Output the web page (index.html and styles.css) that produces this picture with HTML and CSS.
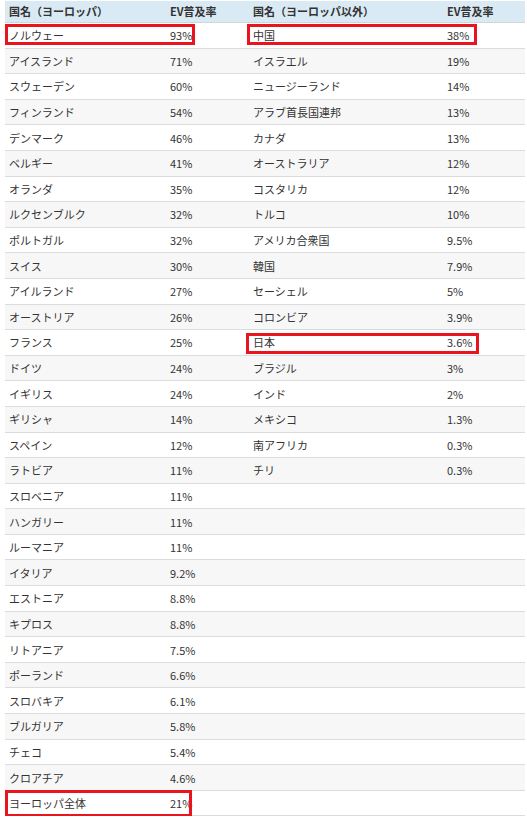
FILE: index.html
```html
<!DOCTYPE html>
<html lang="ja">
<head>
    <meta charset="UTF-8">
    <meta name="viewport" content="width=device-width, initial-scale=1.0">
    <title>EV普及率</title>
    <link rel="stylesheet" href="styles.css">
</head>
<body>

<div class="wrap">
<table class="ev-table">
    <colgroup>
        <col class="c-name-l">
        <col class="c-rate-l">
        <col class="c-name-r">
        <col class="c-rate-r">
    </colgroup>
    <thead>
        <tr>
            <th>国名（ヨーロッパ）</th>
            <th>EV普及率</th>
            <th>国名（ヨーロッパ以外）</th>
            <th>EV普及率</th>
        </tr>
    </thead>
    <tbody>
        <tr><td>ノルウェー</td><td>93%</td><td>中国</td><td>38%</td></tr>
        <tr><td>アイスランド</td><td>71%</td><td>イスラエル</td><td>19%</td></tr>
        <tr><td>スウェーデン</td><td>60%</td><td>ニュージーランド</td><td>14%</td></tr>
        <tr><td>フィンランド</td><td>54%</td><td>アラブ首長国連邦</td><td>13%</td></tr>
        <tr><td>デンマーク</td><td>46%</td><td>カナダ</td><td>13%</td></tr>
        <tr><td>ベルギー</td><td>41%</td><td>オーストラリア</td><td>12%</td></tr>
        <tr><td>オランダ</td><td>35%</td><td>コスタリカ</td><td>12%</td></tr>
        <tr><td>ルクセンブルク</td><td>32%</td><td>トルコ</td><td>10%</td></tr>
        <tr><td>ポルトガル</td><td>32%</td><td>アメリカ合衆国</td><td>9.5%</td></tr>
        <tr><td>スイス</td><td>30%</td><td>韓国</td><td>7.9%</td></tr>
        <tr><td>アイルランド</td><td>27%</td><td>セーシェル</td><td>5%</td></tr>
        <tr><td>オーストリア</td><td>26%</td><td>コロンビア</td><td>3.9%</td></tr>
        <tr><td>フランス</td><td>25%</td><td>日本</td><td>3.6%</td></tr>
        <tr><td>ドイツ</td><td>24%</td><td>ブラジル</td><td>3%</td></tr>
        <tr><td>イギリス</td><td>24%</td><td>インド</td><td>2%</td></tr>
        <tr><td>ギリシャ</td><td>14%</td><td>メキシコ</td><td>1.3%</td></tr>
        <tr><td>スペイン</td><td>12%</td><td>南アフリカ</td><td>0.3%</td></tr>
        <tr><td>ラトビア</td><td>11%</td><td>チリ</td><td>0.3%</td></tr>
        <tr><td>スロベニア</td><td>11%</td><td></td><td></td></tr>
        <tr><td>ハンガリー</td><td>11%</td><td></td><td></td></tr>
        <tr><td>ルーマニア</td><td>11%</td><td></td><td></td></tr>
        <tr><td>イタリア</td><td>9.2%</td><td></td><td></td></tr>
        <tr><td>エストニア</td><td>8.8%</td><td></td><td></td></tr>
        <tr><td>キプロス</td><td>8.8%</td><td></td><td></td></tr>
        <tr><td>リトアニア</td><td>7.5%</td><td></td><td></td></tr>
        <tr><td>ポーランド</td><td>6.6%</td><td></td><td></td></tr>
        <tr><td>スロバキア</td><td>6.1%</td><td></td><td></td></tr>
        <tr><td>ブルガリア</td><td>5.8%</td><td></td><td></td></tr>
        <tr><td>チェコ</td><td>5.4%</td><td></td><td></td></tr>
        <tr><td>クロアチア</td><td>4.6%</td><td></td><td></td></tr>
        <tr><td>ヨーロッパ全体</td><td>21%</td><td></td><td></td></tr>
    </tbody>
</table>

<!-- red annotation boxes drawn over the table -->
<div class="mark mark-norway"></div>
<div class="mark mark-china"></div>
<div class="mark mark-japan"></div>
<div class="mark mark-europe"></div>
</div>

</body>
</html>
```

FILE: styles.css
```css
body {
    margin: 0;
    background-color: #fff;
    font-family: "Noto Sans CJK JP", "Noto Sans", sans-serif;
    color: #333;
}

.wrap {
    position: relative;
    width: 527px;
    padding-top: 1px;
}

.ev-table {
    margin-left: 5px;
    width: 520px;
    table-layout: fixed;
    border-collapse: collapse;
    font-size: 11px;
    line-height: 14px;
}

.c-name-l { width: 161px; }
.c-rate-l { width: 83px; }
.c-name-r { width: 194px; }
.c-rate-r { width: 82px; }

.ev-table th {
    height: 20px;
    padding: 0 4px 1px;
    text-align: left;
    font-weight: bold;
    background-color: #d9eaf4;
    border-bottom: 1px solid #d4d4d4;
}

.ev-table td {
    height: 24.6px;
    padding: 0 4px;
    border-bottom: 1px solid #dcdcdc;
    white-space: nowrap;
}

.ev-table tbody tr:nth-child(even) td {
    background-color: #f7f7f7;
}

.mark {
    position: absolute;
    border: 3px solid #e8141e;
    box-sizing: border-box;
}

.mark-norway { left: 5px; top: 24px; width: 190px; height: 21px; }
.mark-china { left: 247px; top: 24px; width: 230px; height: 21px; }
.mark-japan { left: 246px; top: 333px; width: 233px; height: 21px; }
.mark-europe { left: 5px; top: 790px; width: 187px; height: 27px; }
```
